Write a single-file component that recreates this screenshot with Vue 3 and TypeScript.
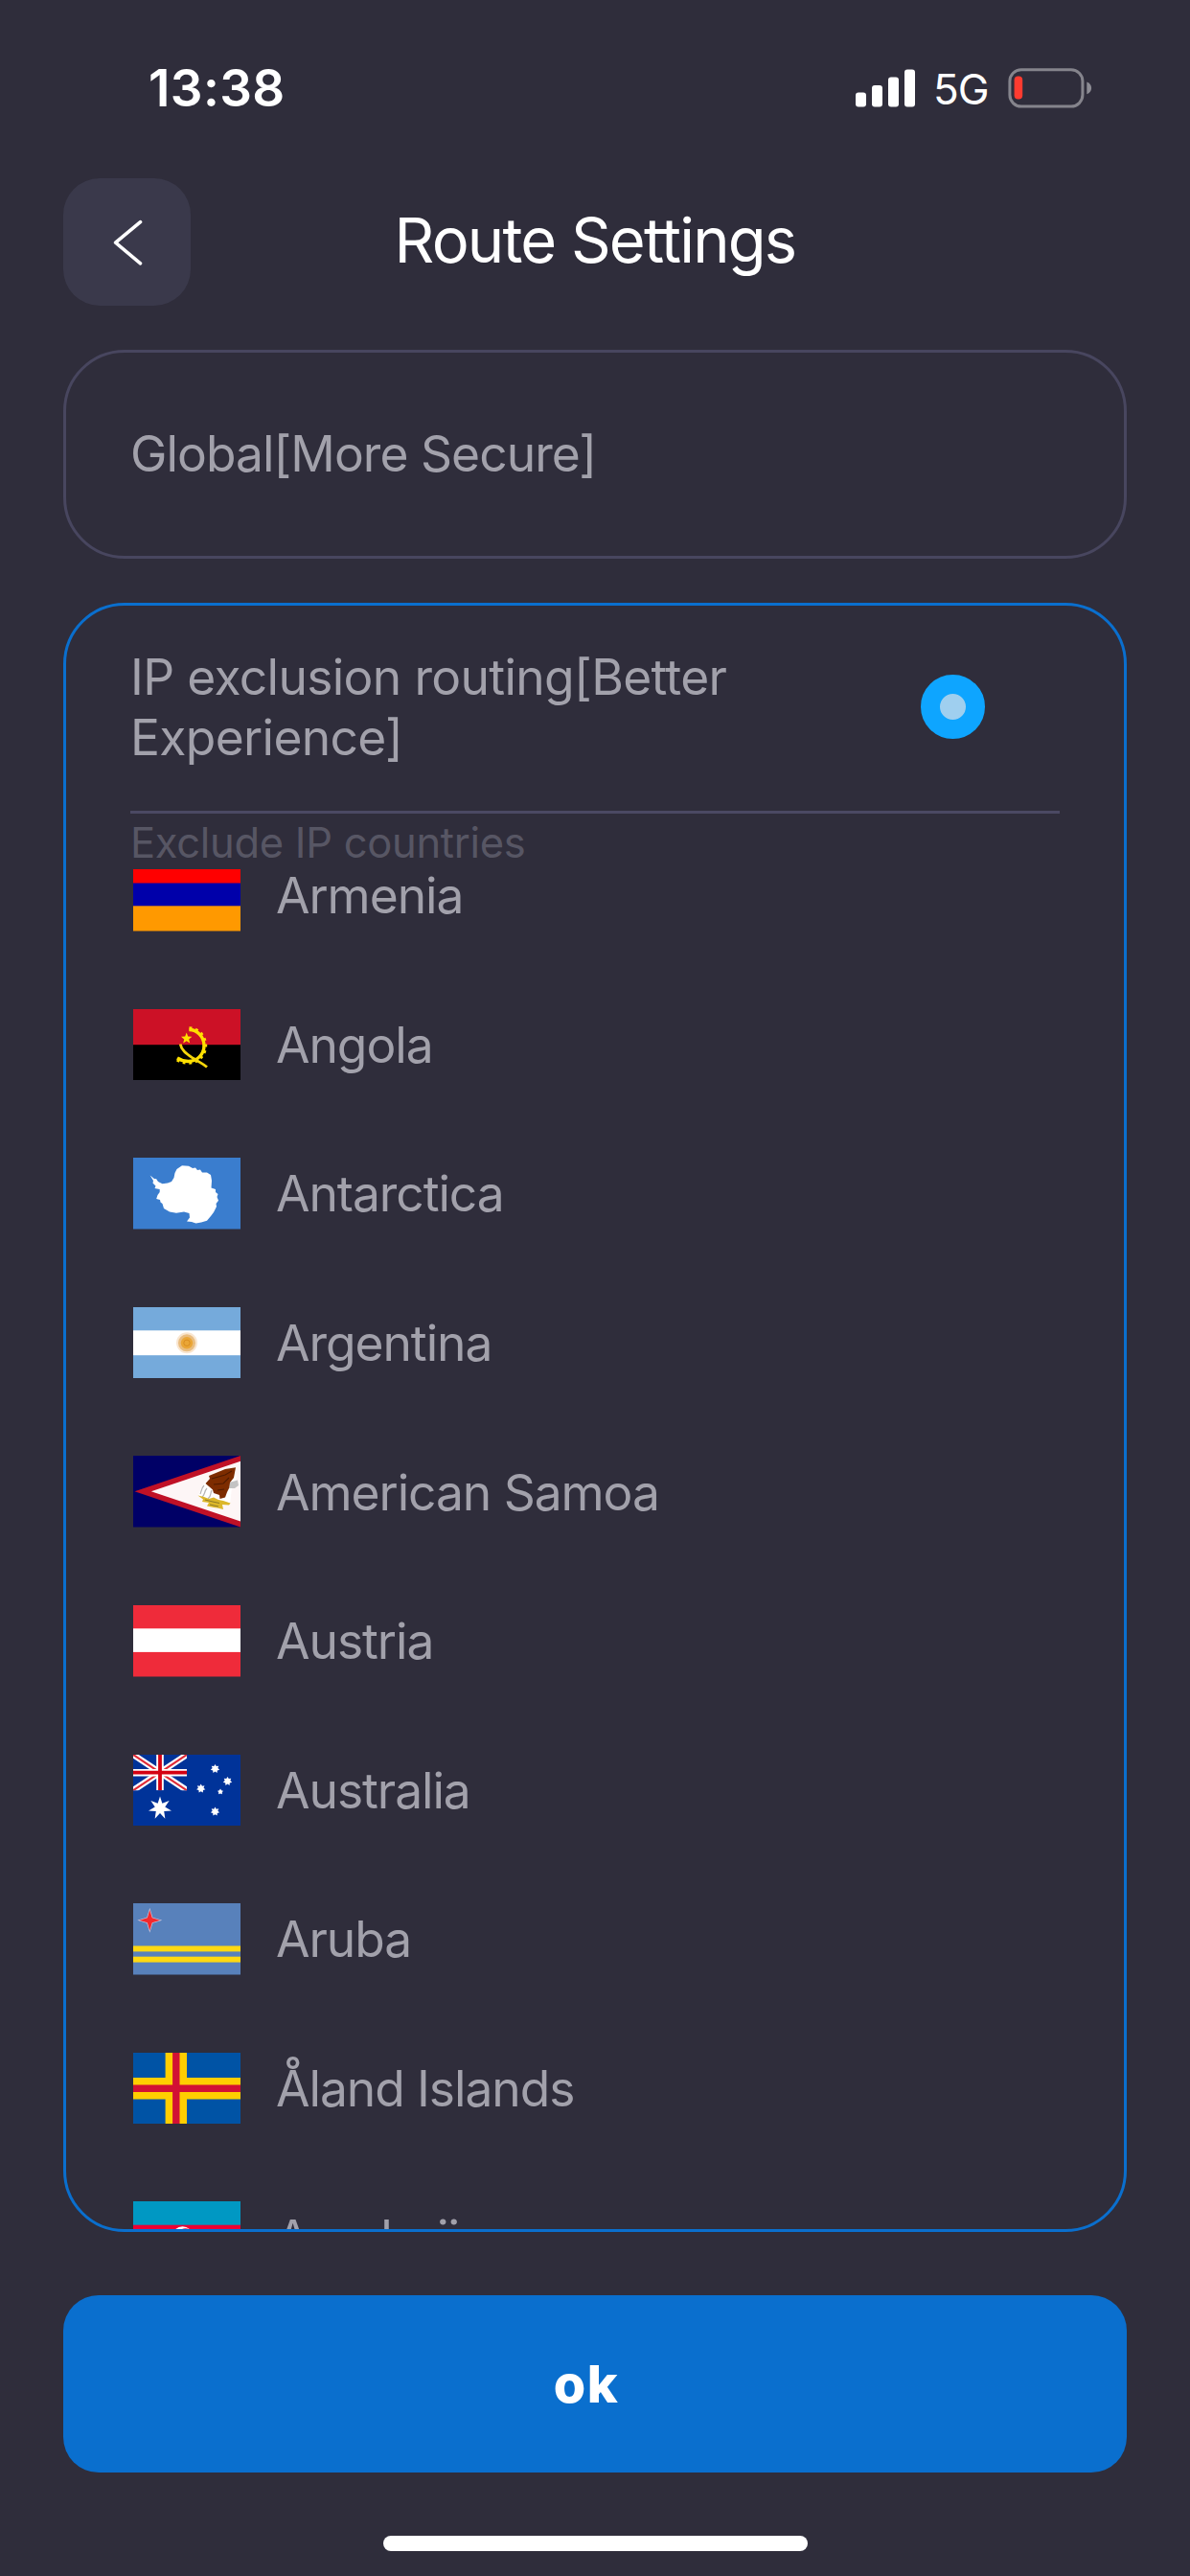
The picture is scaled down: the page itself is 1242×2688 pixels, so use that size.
<script setup lang="ts">
interface Country {
  code: string
  name: string
}

const countries: Country[] = [
  { code: 'am', name: 'Armenia' },
  { code: 'ao', name: 'Angola' },
  { code: 'aq', name: 'Antarctica' },
  { code: 'ar', name: 'Argentina' },
  { code: 'as', name: 'American Samoa' },
  { code: 'at', name: 'Austria' },
  { code: 'au', name: 'Australia' },
  { code: 'aw', name: 'Aruba' },
  { code: 'ax', name: 'Åland Islands' },
  { code: 'az', name: 'Azerbaijan' },
]

function star(cx: number, cy: number, outer: number, inner: number, tips: number): string {
  const points: string[] = []
  for (let i = 0; i < tips * 2; i++) {
    const r = i % 2 === 0 ? outer : inner
    const a = (Math.PI * i) / tips - Math.PI / 2
    points.push(`${(cx + r * Math.cos(a)).toFixed(2)},${(cy + r * Math.sin(a)).toFixed(2)}`)
  }
  return points.join(' ')
}

const southernCross = [
  star(85.5, 14.7, 4.8, 2.9, 7),
  star(98.5, 27.7, 4.8, 2.9, 7),
  star(70.7, 35.3, 4.8, 2.9, 7),
  star(91, 38.7, 3.1, 1.9, 5),
  star(85.5, 59.3, 4.8, 2.9, 7),
]
</script>

<template>
  <div class="screen">
    <div class="status">
      <span class="time">13:38</span>
      <div class="indicators">
        <svg class="signal" width="62" height="40" viewBox="0 0 62 40" fill="#fff">
          <rect x="0" y="24.6" width="11" height="15" rx="3" />
          <rect x="17" y="17" width="11" height="22.6" rx="3" />
          <rect x="34" y="8.6" width="11" height="31" rx="3" />
          <rect x="51" y="0.4" width="11" height="39.2" rx="3" />
        </svg>
        <span class="network">5G</span>
        <svg class="battery" width="88" height="42" viewBox="0 0 88 42">
          <rect x="1.9" y="1.7" width="76" height="38.4" rx="12" fill="none" stroke="#85848c" stroke-width="3" />
          <rect x="6.6" y="8.4" width="8.6" height="24" rx="4" fill="#ff3b30" />
          <path d="M82.3 14.6c3 1.2 4.8 3.6 4.8 6.3s-1.8 5.1-4.8 6.3z" fill="#8d8c94" />
        </svg>
      </div>
    </div>

    <header class="nav">
      <button class="back" aria-label="Back">
        <svg width="34" height="52" viewBox="0 0 34 52" fill="none" stroke="#fff" stroke-width="3.6" stroke-linecap="round" stroke-linejoin="round">
          <path d="M30.5 4.6 4.6 26.2 30.5 47.9" />
        </svg>
      </button>
      <h1 class="title">Route Settings</h1>
    </header>

    <section class="card option">
      <span class="label label-global">Global[More Secure]</span>
    </section>

    <section class="card selected">
      <div class="option-head">
        <span class="label label-ip">IP exclusion routing[Better Experience]</span>
        <span class="radio"></span>
      </div>
      <div class="divider"></div>
      <div class="caption"><span>Exclude IP countries</span></div>
      <div class="list">
        <div class="rows">
          <div v-for="c in countries" :key="c.code" class="row">
            <svg class="flag" viewBox="0 0 112 74.5" preserveAspectRatio="none">
              <template v-if="c.code === 'am'">
                <rect width="112" height="74.5" fill="#ff9900" />
                <rect width="112" height="48.3" fill="#0000aa" />
                <rect width="112" height="24.5" fill="#ff0000" />
              </template>
              <template v-else-if="c.code === 'ao'">
                <rect width="112" height="74.5" fill="#000" />
                <rect width="112" height="37.2" fill="#cc1126" />
                <path d="M58.5 21.5C67 21.5 74 29 74 38S67 54.5 57.5 54.5C53 54.5 49 53 46 51" fill="none" stroke="#ffe000" stroke-width="3.4" />
                <path d="M58.5 20.5C68 20.5 75 29 75 38S68 55.5 57.5 55.5C53 55.5 49 54.5 45.5 52" fill="none" stroke="#ffe000" stroke-width="4.4" stroke-dasharray="2.7 3.6" />
                <path d="M49.2 36.5C50.5 44 57 47.5 63 51.5S73 57 77 60.5" fill="none" stroke="#f5d60a" stroke-width="2.8" />
                <polygon :points="star(55.7, 30.6, 6, 2.6, 5)" fill="#ffe000" />
              </template>
              <template v-else-if="c.code === 'aq'">
                <rect width="112" height="74.5" fill="#3a7dce" />
                <path d="M17.7 18.5 22 22 24 22 26 25 30.500 27.300 36 26.500 40 25 42.500 21 43.500 16 45.500 12 51 8.300 58 8.800 62 11 65 10.500 67 13 70 12.500 72 15.500 77 15.500 81 18 82 24 81.500 31.500 86 33 86 36 88.500 38 87.500 41 89 44.700 86.500 48 87 51 84 57 81 61 77 65.700 71 67.500 65.500 68.500 61 67 56 66.500 59 62.500 58.500 58 53 56.500 45 57.800 38 56.500 32 53 30.500 48 28.500 46.500 28 44 24.200 43 25.500 39 27.700 36 27.700 33 22.500 32 23.500 29.500 20.500 26.500 21 24Z" fill="#fff" />
              </template>
              <template v-else-if="c.code === 'ar'">
                <rect width="112" height="74.5" fill="#75aadb" />
                <rect y="24.3" width="112" height="25.9" fill="#fff" />
                <circle cx="56" cy="37.3" r="11" fill="#f9e6d0" />
                <circle cx="56" cy="37.3" r="9" fill="#e9bd80" />
                <circle cx="56" cy="37.3" r="6.2" fill="#eaa636" />
                <circle cx="56" cy="37.3" r="3.2" fill="none" stroke="#d98d22" stroke-width="1" />
              </template>
              <template v-else-if="c.code === 'as'">
                <rect width="112" height="74.5" fill="#000066" />
                <path d="M1.5 37.2 112 0V74.5Z" fill="#c01126" />
                <path d="M18.8 37.2 112 5.8V68.6Z" fill="#fdf6f6" />
                <path d="M75 27 71 34 68 41 73 44 90 50 101 50 103 34 108 22 106 12Z" fill="#fff" />
                <path d="M74 31C71 34 71 38 70 40M77 34C74 37 75 41 72 43M82 36C80 40 82 42 78 45" fill="none" stroke="#b5b5b5" stroke-width="1.2" />
                <path d="M100 28 109 25.5 110 31 106 34 100 34Z" fill="#c3c3c3" />
                <path d="M107 12.2 96 14 79 21 80 24 75.5 29 79 32 83 35.5 84 39 90 41 90.5 45 96 43.5 98 38 100 34 101 28 105 23Z" fill="#7d2c00" />
                <path d="M82 24 96 20 103 16M84 30 94 29 100 23M88 36 95 35" fill="none" stroke="#4f1b00" stroke-width="1.1" />
                <path d="M67.5 41.5 74 43 79 45 84 43.5 89 46 94 47 101.5 49.5 100 51.5 93 51 94 56 88 54.5 84 54 77 52.5 79 49 72 48 73 45.5Z" fill="#dcb72a" />
                <path d="M75 46 83 48 90 49.5M80 51 89 53" fill="none" stroke="#8d7a2a" stroke-width="1" />
              </template>
              <template v-else-if="c.code === 'at'">
                <rect width="112" height="74.5" fill="#ef2b3a" />
                <rect y="24.3" width="112" height="24.6" fill="#fff" />
              </template>
              <template v-else-if="c.code === 'au'">
                <rect width="112" height="74.5" fill="#003399" />
                <svg x="0" y="0" width="56" height="37.2" viewBox="0 0 56 37.2">
                  <path d="M0 0 56 37.2M56 0 0 37.2" stroke="#fff" stroke-width="6.4" />
                  <path d="M0 0 56 37.2M56 0 0 37.2" stroke="#e02a36" stroke-width="2.2" />
                  <path d="M28 0V37.2M0 18.7H56" stroke="#fff" stroke-width="7.6" />
                  <path d="M28 0V37.2M0 18.7H56" stroke="#d40012" stroke-width="3.8" />
                </svg>
                <polygon :points="star(28, 55.7, 12.3, 5.4, 7)" fill="#fff" />
                <polygon v-for="p in southernCross" :key="p" :points="p" fill="#fff" />
              </template>
              <template v-else-if="c.code === 'aw'">
                <rect width="112" height="74.5" fill="#5881bb" />
                <rect y="44.5" width="112" height="5.9" fill="#ffd911" />
                <rect y="55.7" width="112" height="5.9" fill="#ffd911" />
                <polygon :points="star(17.3, 17.7, 13, 4.3, 4)" fill="#c9c4da" />
                <polygon :points="star(17.3, 17.7, 10.8, 3.5, 4)" fill="#f5282d" />
              </template>
              <template v-else-if="c.code === 'ax'">
                <rect width="112" height="74.5" fill="#0053a5" />
                <path d="M44.8 0V74.5M0 37.3H112" stroke="#ffce00" stroke-width="22.4" />
                <path d="M44.8 0V74.5M0 37.3H112" stroke="#d21034" stroke-width="7.4" />
              </template>
              <template v-else>
                <rect width="112" height="74.5" fill="#3f9c35" />
                <rect width="112" height="49.6" fill="#ed0033" />
                <rect width="112" height="24.7" fill="#0098c3" />
                <circle cx="51.5" cy="37.3" r="11" fill="#fff" />
                <circle cx="54.5" cy="37.3" r="9" fill="#ed0033" />
                <polygon :points="star(61, 37.3, 6, 3, 8)" fill="#fff" />
              </template>
            </svg>
            <span class="country">{{ c.name }}</span>
          </div>
        </div>
      </div>
    </section>

    <button class="ok"><span>ok</span></button>
    <div class="home"></div>
  </div>
</template>

<style>
body {
  margin: 0;
  background: #2f2d3b;
}
</style>

<style scoped>
.screen {
  box-sizing: border-box;
  width: 1242px;
  height: 2688px;
  padding: 0 66px;
  display: flex;
  flex-direction: column;
  overflow: hidden;
  background: #2f2d3b;
  color: #fff;
  font-family: Inter, "Liberation Sans", sans-serif;
}

button {
  border: 0;
  padding: 0;
  color: inherit;
  font: inherit;
}

.status {
  height: 186px;
  flex: none;
  display: flex;
  justify-content: space-between;
  align-items: flex-start;
  padding: 0 36px 0 89px;
}

.time {
  margin-top: 60px;
  font-size: 53px;
  line-height: 64px;
  font-weight: 600;
  letter-spacing: 0.4px;
}

.indicators {
  display: flex;
  align-items: flex-start;
}

.signal {
  margin-top: 72px;
}

.network {
  width: 58px;
  margin: 67px 20px 0 19px;
  font-size: 44px;
  line-height: 52px;
  letter-spacing: -1px;
  white-space: nowrap;
}

.battery {
  margin-top: 71px;
}

.nav {
  height: 133px;
  flex: none;
  display: flex;
  align-items: center;
  padding-right: 133px;
}

.back {
  width: 133px;
  height: 133px;
  flex: none;
  border-radius: 38px;
  background: #3a394b;
  display: flex;
  align-items: center;
  justify-content: center;
}

.title {
  flex: 1;
  margin: 0;
  padding-bottom: 3px;
  text-align: center;
  font-size: 65px;
  line-height: 80px;
  font-weight: 400;
  letter-spacing: -1.8px;
  white-space: nowrap;
}

.card {
  box-sizing: border-box;
  flex: none;
  border: 3px solid #48465f;
  border-radius: 64px;
  overflow: hidden;
}

.option {
  margin-top: 46px;
  height: 218px;
  padding: 0 67px;
  display: flex;
  align-items: center;
}

.label {
  font-size: 51.5px;
  line-height: 63px;
  color: #a2a1ab;
}

.label-global {
  padding-bottom: 2px;
  letter-spacing: -0.95px;
}

.selected {
  margin-top: 46px;
  height: 1700px;
  padding: 0 67px;
  border-color: #0a6fce;
  display: flex;
  flex-direction: column;
}

.option-head {
  height: 211px;
  flex: none;
  display: flex;
  align-items: center;
  justify-content: space-between;
  padding-right: 78px;
}

.label-ip {
  width: 660px;
  letter-spacing: -0.65px;
}

.radio {
  box-sizing: border-box;
  width: 67px;
  height: 67px;
  border: 20px solid #0ea5ff;
  border-radius: 50%;
  background: #9fcfef;
}

.divider {
  height: 3px;
  flex: none;
  margin-top: 3px;
  background: #4b4963;
}

.caption {
  height: 58px;
  flex: none;
  font-size: 43.5px;
  line-height: 60px;
  letter-spacing: -0.3px;
  color: #575664;
}

.list {
  flex: 1;
  min-height: 0;
  overflow: hidden;
}

.rows {
  margin-top: -50.5px;
}

.row {
  height: 155.6px;
  display: flex;
  align-items: center;
  gap: 37px;
  padding-left: 3px;
}

.flag {
  width: 112px;
  height: 74.5px;
  flex: none;
}

.country {
  font-size: 51.5px;
  line-height: 52px;
  letter-spacing: -1.05px;
  color: #a2a1ab;
  white-space: nowrap;
}

.ok {
  height: 185px;
  flex: none;
  margin-top: 66px;
  padding-right: 18px;
  border-radius: 37px;
  background: #0a6fce;
  font-size: 54px;
  line-height: 64px;
  font-weight: 800;
  letter-spacing: 1.5px;
  text-align: center;
}

.home {
  width: 443px;
  height: 16px;
  flex: none;
  align-self: center;
  margin-top: 66px;
  border-radius: 8px;
  background: #fff;
}
</style>
